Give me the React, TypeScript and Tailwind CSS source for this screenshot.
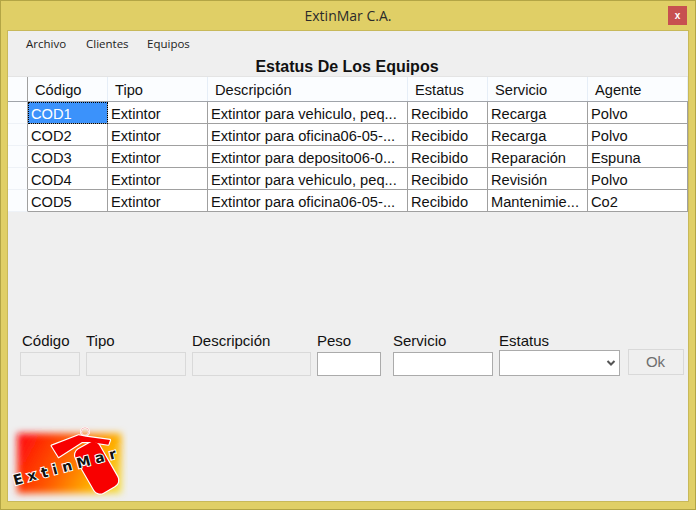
const cols = ["w-[20px]", "w-[80px]", "w-[100px]", "w-[200px]", "w-[80px]", "w-[100px]", "w-[100px]"];
const headers = ["Código", "Tipo", "Descripción", "Estatus", "Servicio", "Agente"];
const rows = [
  ["COD1", "Extintor", "Extintor para vehiculo, peq...", "Recibido", "Recarga", "Polvo"],
  ["COD2", "Extintor", "Extintor para oficina06-05-...", "Recibido", "Recarga", "Polvo"],
  ["COD3", "Extintor", "Extintor para deposito06-0...", "Recibido", "Reparación", "Espuna"],
  ["COD4", "Extintor", "Extintor para vehiculo, peq...", "Recibido", "Revisión", "Polvo"],
  ["COD5", "Extintor", "Extintor para oficina06-05-...", "Recibido", "Mantenimie...", "Co2"],
];

function Field({ label, width, disabled, pad }: { label: string; width: string; disabled?: boolean; pad?: boolean }) {
  return (
    <div className={`flex flex-col ${width}`}>
      <span className={`h-[23px] text-[15px] leading-[24px] text-[#111] whitespace-nowrap ${pad ? "pl-[2px]" : ""}`}>{label}</span>
      <div className={`h-[24px] border ${disabled ? "border-[#d9d9d9] bg-[#efefef]" : "border-[#ababab] bg-white"}`} />
    </div>
  );
}

function Extinguisher() {
  return (
    <>
      <polygon points="155,77 236,46 258,50 330,60 325,74 272,66 246,66 176,111" />
      <rect x="-40" y="-75" width="80" height="150" rx="20" transform="translate(290 143) rotate(-30)" />
    </>
  );
}

function Logo() {
  return (
    <svg width="120" height="75" viewBox="24 15 360 225" className="block">
      <defs>
        <linearGradient id="g" gradientUnits="userSpaceOnUse" x1="60" y1="50" x2="370" y2="220">
          <stop offset="0" stopColor="#ff0a0a" />
          <stop offset="0.4" stopColor="#ff5a00" />
          <stop offset="0.72" stopColor="#ffae00" />
          <stop offset="1" stopColor="#f2e850" />
        </linearGradient>
        <filter id="b" x="-20%" y="-20%" width="140%" height="140%">
          <feGaussianBlur stdDeviation="11" />
        </filter>
      </defs>
      <rect x="52" y="40" width="312" height="180" fill="url(#g)" filter="url(#b)" />
      <circle cx="255" cy="35" r="12" fill="none" stroke="#fff" strokeWidth="6" />
      <circle cx="255" cy="35" r="12" fill="none" stroke="#f2a0a0" strokeWidth="2" />
      <g fill="#fff" stroke="#fff" strokeWidth="7" strokeLinejoin="round"><Extinguisher /></g>
      <g fill="#f80000"><Extinguisher /></g>
      <text x="0" y="0" transform="translate(44 196) rotate(-15)" fontFamily="'DejaVu Sans', sans-serif" fontWeight="700" fontSize="42" textLength="318" lengthAdjust="spacing" fill="#111" stroke="#fff" strokeWidth="6" paintOrder="stroke">ExtinMar</text>
    </svg>
  );
}

export default function App() {
  return (
    <div className="w-[696px] h-[510px] border border-[#b3a545] bg-[#e0cf66] flex flex-col font-['Liberation_Sans',sans-serif] overflow-hidden">
      <div className="h-[29px] shrink-0 flex items-center relative">
        <div className="flex-1 text-center text-[14px] font-['Open_Sans',sans-serif] text-[#2b2b2b] leading-[29px] -mt-[1px]">ExtinMar C.A.</div>
        <div className="absolute right-[8px] top-[5px] w-[19px] h-[19px] bg-[#c75050] flex items-center justify-center text-white text-[10px] font-bold leading-none">x</div>
      </div>
      <div className="mx-[6px] flex-1 mb-[7px] bg-[#efefef] border border-[#c8b95a] flex flex-col overflow-hidden">
        <div className="h-[28px] shrink-0 flex items-center pl-[18px] gap-[19px] text-[11.5px] font-['Open_Sans',sans-serif] text-[#222] pb-[3px]">
          <span className="w-[41px]">Archivo</span><span className="w-[42px]">Clientes</span><span>Equipos</span>
        </div>
        <div className="h-[17px] shrink-0 text-center text-[16px] font-bold leading-[15px] text-[#111] pr-[2px]">Estatus De Los Equipos</div>
        <div className="h-[136px] shrink-0 border-t border-[#e4e4e4] flex flex-col">
          <div className="h-[25px] flex bg-[#fbfdff] border-b border-[#a0a4aa] text-[14.67px] text-[#111]">
            <div className={`${cols[0]} border-r border-[#a0a0a0]`} />
            {headers.map((h, i) => (
              <div key={h} className={`${cols[i + 1]} border-r border-[#e6eef7] pl-[7px] leading-[26px]`}>{h}</div>
            ))}
          </div>
          {rows.map((r, ri) => (
            <div key={r[0]} className="h-[22px] flex text-[14.67px] text-[#111]">
              <div className={`${cols[0]} bg-[#fbfdff] border-r border-b border-r-[#a0a0a0] border-b-[#eef2f7]`} />
              {r.map((c, i) => (
                <div key={i} className={`${cols[i + 1]} bg-white border-r border-b border-[#a0a0a0] pl-[3px] leading-[25px] whitespace-nowrap overflow-hidden ${ri === 0 && i === 0 ? "!bg-[#3b92fb] text-white outline-1 -outline-offset-1 outline-dotted outline-black" : ""}`}>{c}</div>
              ))}
            </div>
          ))}
        </div>
        <div className="mt-[117px] h-[48px] shrink-0 flex items-end pl-[12px] pb-[1px]">
          <Field label="Código" width="w-[60px]" disabled pad />
          <div className="w-[6px]" />
          <Field label="Tipo" width="w-[100px]" disabled />
          <div className="w-[6px]" />
          <Field label="Descripción" width="w-[119px]" disabled />
          <div className="w-[6px]" />
          <Field label="Peso" width="w-[64px]" />
          <div className="w-[12px]" />
          <Field label="Servicio" width="w-[100px]" />
          <div className="w-[6px]" />
          <div className="flex flex-col w-[121px]">
            <span className="h-[23px] text-[15px] leading-[24px] text-[#111]">Estatus</span>
            <div className="h-[26px] -mt-[2px] border border-[#ababab] bg-white flex items-center justify-end pr-[2px]">
              <svg width="12" height="12" viewBox="0 0 12 12"><path d="M2.5 4 L6 7.5 L9.5 4" fill="none" stroke="#555" strokeWidth="2" /></svg>
            </div>
          </div>
          <div className="ml-[8px] mb-[1px] w-[56px] h-[26px] border border-[#d9d9d9] bg-[#efefef] text-center text-[15px] leading-[24px] text-[#6d6d6d] pr-[1px]">Ok</div>
        </div>
        <div className="mt-[48px]">
          <Logo />
        </div>
      </div>
    </div>
  );
}
